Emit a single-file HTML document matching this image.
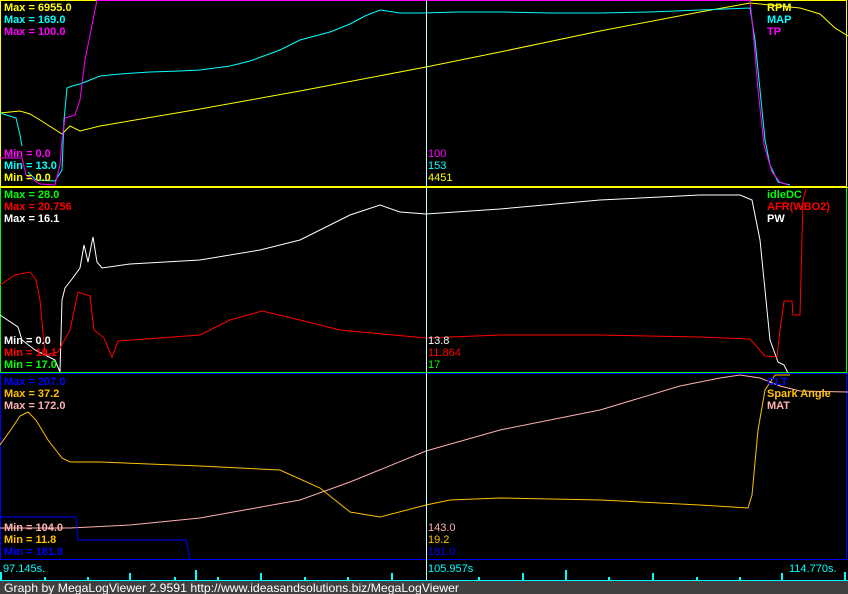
<!DOCTYPE html>
<html><head><style>
body{margin:0;background:#000;width:848px;height:594px;overflow:hidden;font-family:"Liberation Sans",Arial,sans-serif}
svg{display:block}
text{font-family:"Liberation Sans",Arial,sans-serif;font-size:11px;font-weight:bold}
.n{font-weight:normal}
</style></head><body>
<svg width="848" height="594" viewBox="0 0 848 594">
<rect x="0" y="0" width="848" height="594" fill="#000"/>
<g fill="none" stroke-width="1">
<rect x="0.5" y="0.5" width="846" height="186" stroke="#ffff00"/>
<rect x="0.5" y="187.5" width="846" height="185" stroke="#00ff00"/>
<line x1="0" y1="187.5" x2="848" y2="187.5" stroke="#ffff00"/>
<rect x="0.5" y="373.5" width="846" height="186" stroke="#0000ff"/>
<line x1="97" y1="0.5" x2="750" y2="0.5" stroke="#ff00ff"/>
<!-- panel 1 -->
<polyline stroke="#ffff00" points="0,113 20,111 30,114 40,120 62,134 70,126 80,131 100,126 200,109 300,91 426,67 500,52 600,31 700,12 750,3 770,5 800,8 820,14 835,28 848,36"/>
<polyline stroke="#00ffff" points="0,113 16,118 20,135 22,146"/>
<polyline stroke="#00ffff" points="28,172 36,180 55,181 62,170 64,120 67,88 72,86 80,84 90,80 100,76 120,74 150,72 180,71 200,70 230,66 250,61 280,50 300,40 330,32 350,24 365,16 380,10 400,13 420,13 460,12 500,12 550,13 600,13 650,12 700,10 750,8 755,40 760,90 765,140 770,165 778,182 790,185"/>
<polyline stroke="#ff00ff" points="0,158 22,158 26,175 40,184 55,185 60,165 62,140 65,118 75,115 80,100 85,60 97,0 750,0 753,30 758,90 764,145 772,172 780,182 788,185"/>
<!-- panel 2 -->
<polyline stroke="#ffffff" points="0,315 18,327 22,340 35,350 55,360 60,372 62,300 65,288 72,279 80,268 84,245 88,262 93,237 97,262 102,268 130,264 200,260 260,250 300,240 350,215 365,210 380,205 400,212 426,214 500,209 600,200 700,195 740,195 752,200 760,240 765,290 770,340 778,362 784,365 788,373"/>
<polyline stroke="#ff0000" points="0,285 15,275 30,272 36,280 40,300 45,355 58,352 70,330 78,292 90,296 94,330 104,338 112,357 118,341 200,335 230,320 262,311 300,320 340,330 426,338 500,335 600,335 700,337 750,339 765,356 777,357 780,330 784,301 792,301 793,315 800,315 803,200 806,189"/>
<!-- panel 3 -->
<polyline stroke="#ffc000" points="0,445 12,428 20,416 28,412 36,420 48,440 62,458 70,462 100,462 200,466 280,470 320,488 350,512 380,517 426,505 450,500 500,498 600,500 700,505 748,508 752,495 758,430 765,390 775,375 790,375"/>
<polyline stroke="#ffb0b0" points="0,528 70,528 130,525 200,518 300,500 350,482 426,451 500,430 600,410 680,386 720,378 740,375 760,378 780,386 800,391 848,392"/>
<polyline stroke="#0000ff" points="0,517 76,517 78,540 186,540 190,559"/>
<!-- cursor -->
<line x1="426.5" y1="0" x2="426.5" y2="581" stroke="#c0ffff"/>
<!-- timeline -->
<line x1="0" y1="580.5" x2="848" y2="580.5" stroke="#00ffff"/>
</g>
<g stroke="#00ffff" stroke-width="2">
<line x1="1" y1="572" x2="1" y2="581"/><line x1="130" y1="573" x2="130" y2="581"/>
<line x1="261" y1="573" x2="261" y2="581"/><line x1="392" y1="573" x2="392" y2="581"/>
<line x1="523" y1="573" x2="523" y2="581"/><line x1="653" y1="573" x2="653" y2="581"/>
<line x1="782" y1="573" x2="782" y2="581"/><line x1="845" y1="572" x2="845" y2="581"/>
<line x1="45" y1="577" x2="45" y2="581"/><line x1="88" y1="577" x2="88" y2="581"/>
<line x1="175" y1="577" x2="175" y2="581"/><line x1="218" y1="577" x2="218" y2="581"/>
<line x1="305" y1="577" x2="305" y2="581"/><line x1="348" y1="577" x2="348" y2="581"/>
<line x1="479" y1="577" x2="479" y2="581"/><line x1="566" y1="577" x2="566" y2="581"/>
<line x1="609" y1="577" x2="609" y2="581"/><line x1="697" y1="577" x2="697" y2="581"/>
<line x1="740" y1="577" x2="740" y2="581"/>
<line x1="196" y1="570" x2="196" y2="581"/><line x1="566" y1="570" x2="566" y2="581"/>
</g>
<rect x="0" y="581" width="848" height="13" fill="#404040"/>
<text x="4" y="592" fill="#ffffff" class="n" textLength="455" lengthAdjust="spacingAndGlyphs" style="font-size:12px">Graph by MegaLogViewer 2.9591 http://www.ideasandsolutions.biz/MegaLogViewer</text>
<text x="3" y="572" fill="#00ffff" class="n">97.145s.</text>
<text x="428" y="572" fill="#00ffff" class="n">105.957s</text>
<text x="789" y="572" fill="#00ffff" class="n">114.770s.</text>
<!-- labels panel 1 -->
<text x="4" y="11" fill="#ffff00">Max = 6955.0</text>
<text x="4" y="23" fill="#00ffff">Max = 169.0</text>
<text x="4" y="35" fill="#ff00ff">Max = 100.0</text>
<text x="4" y="157" fill="#ff00ff">Min = 0.0</text>
<text x="4" y="169" fill="#00ffff">Min = 13.0</text>
<text x="4" y="181" fill="#ffff00">Min = 0.0</text>
<text x="767" y="11" fill="#ffff00">RPM</text>
<text x="767" y="23" fill="#00ffff">MAP</text>
<text x="767" y="35" fill="#ff00ff">TP</text>
<text x="428" y="157" fill="#ff00ff" class="n">100</text>
<text x="428" y="169" fill="#00ffff" class="n">153</text>
<text x="428" y="181" fill="#ffff00" class="n">4451</text>
<!-- panel 2 -->
<text x="4" y="198" fill="#00ff00">Max = 28.0</text>
<text x="4" y="210" fill="#ff0000">Max = 20.756</text>
<text x="4" y="222" fill="#ffffff">Max = 16.1</text>
<text x="4" y="344" fill="#ffffff">Min = 0.0</text>
<text x="4" y="356" fill="#ff0000">Min = 10.1</text>
<text x="4" y="368" fill="#00ff00">Min = 17.0</text>
<text x="767" y="198" fill="#00ff00">idleDC</text>
<text x="767" y="210" fill="#ff0000">AFR(WBO2)</text>
<text x="767" y="222" fill="#ffffff">PW</text>
<text x="428" y="344" fill="#ffffff" class="n">13.8</text>
<text x="428" y="356" fill="#ff0000" class="n">11.864</text>
<text x="428" y="368" fill="#00ff00" class="n">17</text>
<!-- panel 3 -->
<text x="4" y="385" fill="#0000ff">Max = 207.0</text>
<text x="4" y="397" fill="#ffc000">Max = 37.2</text>
<text x="4" y="409" fill="#ffb0b0">Max = 172.0</text>
<text x="4" y="531" fill="#ffb0b0">Min = 104.0</text>
<text x="4" y="543" fill="#ffc000">Min = 11.8</text>
<text x="4" y="555" fill="#0000ff">Min = 181.0</text>
<text x="767" y="385" fill="#0000ff">CLT</text>
<text x="767" y="397" fill="#ffc000">Spark Angle</text>
<text x="767" y="409" fill="#ffb0b0">MAT</text>
<text x="428" y="531" fill="#ffb0b0" class="n">143.0</text>
<text x="428" y="543" fill="#ffc000" class="n">19.2</text>
<text x="428" y="555" fill="#0000ff" class="n">181.0</text>
</svg>
</body></html>
